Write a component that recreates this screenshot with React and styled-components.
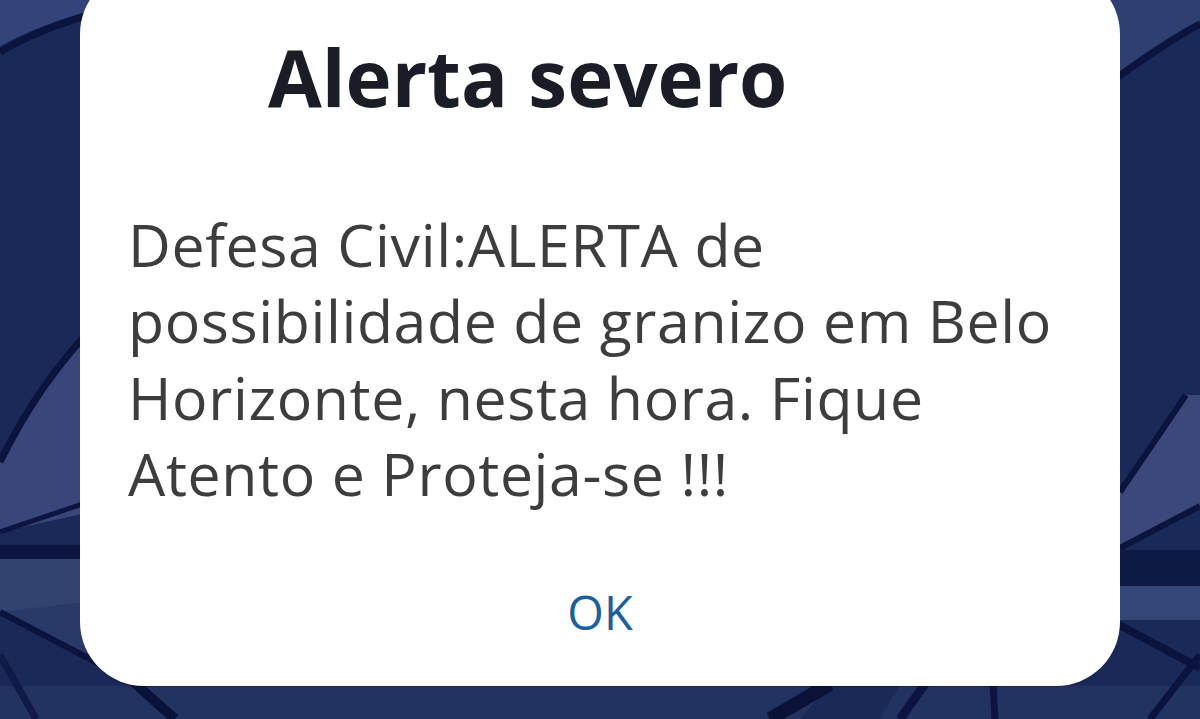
import React from 'react';
import styled, { createGlobalStyle } from 'styled-components';

const Global = createGlobalStyle`
  html, body {
    margin: 0;
    padding: 0;
    background: #1a2958;
  }
`;

const Screen = styled.div`
  position: relative;
  width: 1200px;
  height: 719px;
  overflow: hidden;
  background: #1a2958;
  font-family: "Open Sans", "Noto Sans", sans-serif;
`;

const Backdrop = styled.svg`
  position: absolute;
  left: 0;
  top: 0;
  width: 1200px;
  height: 719px;
`;

const Dialog = styled.div`
  position: relative;
  box-sizing: border-box;
  margin: -30px 80px 0 80px;
  height: 716px;
  background: #ffffff;
  border-radius: 64px;
  box-shadow: 0 1px 0 rgba(0, 0, 0, 0.25);
  display: flex;
  flex-direction: column;
  padding: 61px 48px 0 48px;
`;

const Title = styled.h1`
  margin: 0;
  padding-left: 140px;
  font-size: 78px;
  font-weight: 700;
  line-height: 1.2;
  color: #1b1d26;
`;

const Message = styled.p`
  margin: 81px 0 0 0;
  font-size: 59px;
  font-weight: 400;
  line-height: 76.5px;
  letter-spacing: 0.6px;
  color: #3d3d3f;
`;

const Actions = styled.div`
  display: flex;
  justify-content: center;
  margin-top: 72px;
`;

const TextButton = styled.button`
  border: none;
  background: none;
  padding: 0;
  font-family: inherit;
  font-size: 47px;
  line-height: 1.2;
  color: #1d5f9e;
  cursor: pointer;
`;

const Shapes = () => (
  <Backdrop viewBox="0 0 1200 719">
    <rect x="0" y="686" width="1200" height="33" fill="#223361" />
    {/* top left */}
    <path d="M0,0 L100,0 L100,8 Q40,24 0,46 Z" fill="#33447a" />
    <path d="M0,52 Q40,28 100,12" stroke="#0b143f" strokeWidth="7" fill="none" />
    {/* left middle */}
    <path d="M0,462 Q40,380 100,320 L100,510 L0,532 Z" fill="#3a4579" />
    <path d="M0,462 Q40,380 100,320" stroke="#0b143f" strokeWidth="7" fill="none" />
    <path d="M0,532 L100,498" stroke="#0c1542" strokeWidth="5" fill="none" />
    <rect x="0" y="545" width="100" height="14" fill="#0d1641" />
    <rect x="0" y="559" width="100" height="52" fill="#31446f" />
    <path d="M0,612 L100,600 L100,660 Z" fill="#2a3a68" />
    <path d="M0,612 L130,680" stroke="#0b143f" strokeWidth="6" fill="none" />
    <path d="M90,640 Q130,680 175,719" stroke="#0a1238" strokeWidth="10" fill="none" />
    <path d="M0,655 L36,719" stroke="#0f1a48" strokeWidth="7" fill="none" />
    {/* top right */}
    <path d="M1100,0 L1200,0 L1200,20 Q1160,40 1100,86 Z" fill="#2f3f70" />
    <path d="M1100,90 Q1160,46 1200,24" stroke="#0b143f" strokeWidth="7" fill="none" />
    {/* right middle */}
    <path d="M1120,492 L1186,395 L1200,395 L1200,505 L1120,548 Z" fill="#3c477a" />
    <path d="M1120,492 L1186,395" stroke="#0b143f" strokeWidth="6" fill="none" />
    <path d="M1120,548 L1200,506" stroke="#0b143f" strokeWidth="6" fill="none" />
    <rect x="1100" y="550" width="100" height="36" fill="#0f1946" />
    <rect x="1100" y="586" width="100" height="34" fill="#324776" />
    <path d="M1110,620 L1200,668" stroke="#0b143f" strokeWidth="8" fill="none" />
    <path d="M1150,719 L1200,655" stroke="#0b143f" strokeWidth="7" fill="none" />
    {/* bottom */}
    <path d="M830,684 L900,684 L880,719 L800,719 Z" fill="#1a2955" />
    <path d="M770,719 L830,684" stroke="#0a1238" strokeWidth="14" fill="none" />
    <path d="M900,719 L925,684" stroke="#0c1541" strokeWidth="9" fill="none" />
    <path d="M993,684 L995,719" stroke="#0c1541" strokeWidth="7" fill="none" />
  </Backdrop>
);

export default function App() {
  return (
    <>
      <Global />
      <Screen>
        <Shapes />
        <Dialog>
          <Title>Alerta severo</Title>
          <Message>
            Defesa Civil:ALERTA de
            <br />
            possibilidade de granizo em Belo
            <br />
            Horizonte, nesta hora. Fique
            <br />
            Atento e Proteja-se !!!
          </Message>
          <Actions>
            <TextButton>OK</TextButton>
          </Actions>
        </Dialog>
      </Screen>
    </>
  );
}
